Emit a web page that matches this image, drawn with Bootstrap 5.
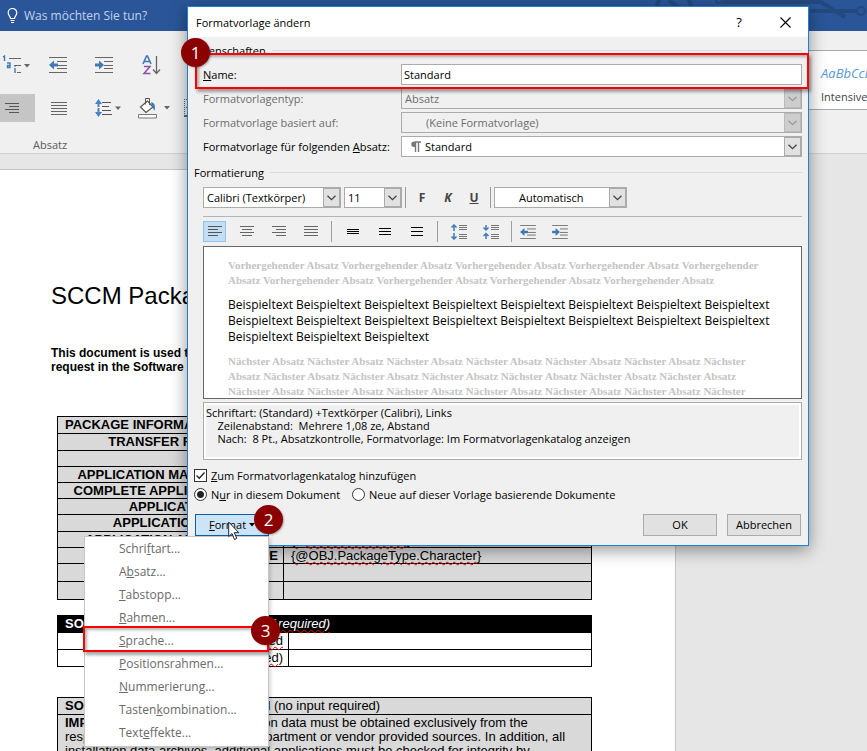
<!DOCTYPE html>
<html lang="de">
<head>
<meta charset="utf-8">
<meta name="viewport" content="width=device-width, initial-scale=1">
<title>Formatvorlage ändern</title>
<link href="https://cdn.jsdelivr.net/npm/bootstrap@5.3.0/dist/css/bootstrap.min.css" rel="stylesheet">
<style>
:root{--ui:"Open Sans","Noto Sans",sans-serif;--doc:"Liberation Sans",Arial,sans-serif}
body{font-family:var(--ui);font-size:11px;line-height:15px;color:#000;background:#e6e6e6}
.app-window{height:100vh;overflow:hidden;background:#e6e6e6}
svg{display:block;flex:none}
button{font-family:inherit}
.topbar{height:31px;background:#2a5699;color:#c3d2ea;font-size:12px}
.topbar .circuit{color:#24497f}
.bulb{margin:0 6px 0 3px}
.ribbon{height:123px;background:#f0f0f0;border-bottom:1px solid #d2d2d2}
.tool{border:0;background:none;padding:0;height:28px;display:flex;align-items:center}
.tool-row{height:28px;margin-bottom:15px}
.tool.chosen{background:#c5c5c5}
.group-label{font-size:11px;color:#5c5c5c;padding-left:33px}
.gallery{width:91px;height:60px;margin-top:19px;background:#fff;border:1px solid #ababab;border-right:0;overflow:hidden;padding:13px 0 0 44px;white-space:nowrap;text-align:left}
.gallery em{color:#5b9bd5;font-size:13px;line-height:18px;display:block}
.gallery span{font-size:11px;color:#444;line-height:30px}
.sheet{width:78%;margin-top:15px;background:#fff;border:1px solid #c6c6c6;border-width:1px 1px 0 0;font-family:var(--doc);padding:112px 83px 0 57px;height:100%}
.sheet h1{font-size:24px;line-height:28px;margin:0 0 36px -6px;white-space:nowrap;font-weight:400}
.lead-in{font-size:12px;line-height:14px;font-weight:700;margin:0 0 42px -6px;white-space:nowrap}
.form-grid{width:100%;border-collapse:collapse;font-size:13px;line-height:14px;white-space:nowrap;table-layout:fixed;margin-bottom:15px}
.form-grid th,.form-grid td{border:1px solid #000;padding:1px 7px 0;height:16px;vertical-align:top}
.form-grid th,.form-grid .text-end{padding-right:5px}
.form-grid th{text-align:right;width:226px}
.form-grid.grey{background:#d9d9d9}
.form-grid.apart{margin-top:30px}
.form-grid .start{text-align:left}
.form-grid .tall{height:18px}
.form-grid .row-mid{height:17px}
.form-grid .inverse{background:#000;color:#fff}
.spell{text-decoration:underline wavy #e00 1px;text-underline-offset:1px}
.dialog-box{position:absolute;left:187px;top:6px;width:622px;background:#f0f0f0;border:1px solid #1e7fd4;box-shadow:0 4px 16px rgba(0,0,0,.42);z-index:2}
.title-strip{height:30px;background:#fff;padding-left:8px;font-size:11px}
.title-strip button{border:0;background:none;padding:0;width:46px;height:30px;display:flex;align-items:center;justify-content:center;font-size:13px}
.dialog-main{padding:5px 6px 9px 6px}
.group-title{gap:6px;height:16px}
.group-title i{height:1px;background:#dadada;flex:1}
.props{padding-top:6px;margin-bottom:7px}
.prop-row{display:grid;grid-template-columns:198px 1fr;padding-left:9px;margin-bottom:3px;align-items:center}
.field{height:21px;border:1px solid #ababab;background:#fff;font-size:11px;line-height:15px;padding:0 2px;border-radius:0;color:#000;width:100%;min-width:0}
.combo{display:flex;height:21px;border:1px solid #ababab;background:#fff;min-width:0}
.combo select{appearance:none;border:0;background:none;flex:1;min-width:0;padding:0 3px;font-size:11px;line-height:15px;color:#000;opacity:1}
.combo .drop{width:17px;background:#e1e1e1;border:1px solid #ababab;display:flex;align-items:center;justify-content:center;pointer-events:none;color:#444}
.combo.off{background:#f0f0f0}
.combo.off select,.off-label{color:#6d6d6d}
.combo.off .drop{background:#cdcdcd;border-color:#bbb;color:#999}
.w-font{width:138px}.w-size{width:58px}.w-color{width:133px}
.indent-1 select{padding-left:24px}
.font-tools{gap:3px;padding-top:7px}
.divider{width:1px;height:21px;background:#9c9c9c}
.fmt{width:26px;height:21px;border:0;background:none;padding:0;font-size:12px;font-weight:700;color:#444;line-height:21px}
.para-tools{gap:9px}
.para{width:23px;height:21px;border:1px solid transparent;background:none;padding:0;display:flex;align-items:center;justify-content:center}
.para.chosen{background:#c2def5;border-color:#90c4ef}
.indented{padding-left:9px}
.preview{height:153px;border:1px solid #666;background:#fff;overflow:hidden;padding:11px 24px 0;white-space:nowrap}
.preview p{margin:0 0 9px}
.preview .ghost{font:700 11px/15px "Liberation Serif",serif;color:#c4c4c4}
.preview .sample{font-size:12px;line-height:16px}
.summary{height:58px;margin-top:3px;border:1px solid #ababab;box-shadow:inset 0 0 0 2px #fff;padding:3px 2px;font-size:11px;line-height:13px;white-space:pre}
.options{padding-top:6px}
.opt{height:19px;gap:4px;display:flex;align-items:center}
.opt input{appearance:none;width:13px;height:13px;margin:0;border:1px solid #333;background:#fff;flex:none}
.opt input[type=radio]{border-radius:50%}
.opt input[type=radio]:checked{background:radial-gradient(circle,#222 3px,#fff 4px)}
.tick{position:relative;display:flex}
.tick svg{position:absolute;left:1px;top:1px;pointer-events:none}
.actions{gap:10px;padding:10px 1px 0}
.push{width:74px;height:22px;border:1px solid #ababab;background:#e1e1e1;padding:0;font-size:11px;line-height:20px}
.push.hot{background:#cce4f7;border-color:#0b5ea8}
.pop-menu{position:absolute;left:84px;top:536px;width:185px;background:#fff;border:1px solid #c6c6c6;padding:0 0 2px;z-index:4;box-shadow:2px 2px 3px rgba(0,0,0,.15)}
.pop-menu button{display:block;width:100%;height:23px;border:0;background:none;text-align:left;padding:0 0 0 34px;font-size:12px;color:#6a6a6a;line-height:22px}
.marker{position:absolute;width:29px;height:29px;border-radius:50%;background:#8b0000;color:#fff;text-align:center;font-size:17px;line-height:29px;z-index:6;box-shadow:1px 1px 2px rgba(0,0,0,.3)}
.frame{position:absolute;border:2px solid #f00;z-index:5;box-shadow:2px 3px 3px rgba(0,0,0,.35),inset 2px 2px 3px rgba(0,0,0,.3);pointer-events:none}
.m1{left:181px;top:38px}.m2{left:254px;top:505px}.m3{left:251px;top:616px}
.f1{left:195px;top:53px;width:614px;height:36px}
.f3{left:83px;top:626px;width:186px;height:26px}
.pointer{position:absolute;left:228px;top:521px;z-index:7}
</style>
<script src="https://cdn.jsdelivr.net/npm/bootstrap@5.3.0/dist/js/bootstrap.bundle.min.js"></script>
</head>
<body>
<svg width="0" height="0" class="position-absolute" aria-hidden="true">
<defs>
<symbol id="chev" viewBox="0 0 9 6"><path d="M.5.8 4.5 4.6 8.5.8" fill="none" stroke="currentColor" stroke-width="1.3"/></symbol>
<symbol id="dedent" viewBox="0 0 18 16"><path d="M0 .5h18M8 4.5h10M8 8.5h10M8 11.5h10M0 15.5h18" stroke="#666" fill="none"/><path d="M0 8l5-4.5v3h4v3H5v3z" fill="#4179b5"/></symbol>
<symbol id="indent" viewBox="0 0 18 16"><path d="M0 .5h18M9 4.5h9M9 8.5h9M9 11.5h9M0 15.5h18" stroke="#666" fill="none"/><path d="M9 8 4 3.500v3H0v3h4v3z" fill="#4179b5"/></symbol>
</defs>
</svg>

<div class="app-window position-relative">
  <header class="topbar d-flex align-items-center ps-1">
    <svg class="bulb" width="11" height="16" viewBox="0 0 10 16" fill="none" stroke="#fff" stroke-width="1.200"><path d="M3 10.500C3 8.500.7 7.500.7 4.800a4.300 4.300 0 0 1 8.600 0C9.300 7.500 7 8.500 7 10.500zM3 12.500h4M3.500 14.500h3"/></svg>
    <span>Was möchten Sie tun?</span>
    <svg class="circuit ms-auto" width="212" height="31" viewBox="0 0 212 31" fill="none" stroke="currentColor" stroke-width="4"><circle cx="19" cy="8" r="17"/><path d="M14 0l10 8M68 2h98l24 15M155 11h47"/><circle cx="64" cy="0" r="3" stroke-width="2"/><circle cx="206" cy="11" r="4" stroke-width="2"/></svg>
  </header>

  <section class="ribbon d-flex" aria-label="Absatz">
    <div class="pt-3">
      <div class="tool-row d-flex mt-1">
        <button class="tool" type="button" aria-label="Liste mit mehreren Ebenen"><svg width="30" height="20" viewBox="-3 0 30 20"><g fill="none" stroke="#666"><path d="M6 3.500h12M11 10.500h7M14 17.500h4"/></g><g fill="none" stroke="#4179b5" stroke-width="1.400"><path d="M0 2l1.500-1v5M4 8h3v4.500H4.500v-2H7M12 13v5M12 10.500v1.300"/></g><path d="M21 9h6l-3 3.500z" fill="#666"/></svg></button>
        <button class="tool ms-3" type="button" aria-label="Einzug verkleinern"><svg width="21" height="16"><use href="#dedent" width="18" height="16" x="3"/></svg></button>
        <button class="tool ms-4" type="button" aria-label="Einzug vergrößern"><svg width="22" height="16"><use href="#indent" width="18" height="16" x="4"/></svg></button>
        <button class="tool ms-4 ps-1" type="button" aria-label="Sortieren"><svg width="22" height="20" viewBox="0 0 22 20" fill="none"><path d="M2 9 5.500 1h1L10 9M3.500 6.500h5" stroke="#4179b5" stroke-width="1.600"/><path d="M3 11.500h6L3 18.500h6.500" stroke="#8a52a8" stroke-width="1.500"/><path d="M15.500 1v17M12 14.500l3.500 4 3.500-4" stroke="#666" stroke-width="1.300"/></svg></button>
      </div>
      <div class="tool-row d-flex">
        <button class="tool chosen" type="button" aria-label="Rechtsbündig"><svg width="35" height="13" viewBox="0 0 35 13"><path d="M5 1.500h14M9 4.500h10M5 7.500h14M9 10.500h10" stroke="#555"/></svg></button>
        <button class="tool ms-3" type="button" aria-label="Blocksatz"><svg width="16" height="13" viewBox="0 0 16 13"><path d="M0 .5h16M0 3.500h16M0 6.500h16M0 9.500h16M0 12.500h16" stroke="#666"/></svg></button>
        <button class="tool ms-4" type="button" aria-label="Zeilenabstand"><svg class="ms-1" width="27" height="20" viewBox="1 0 27 20"><path d="M1 6l3.500-5L8 6H5.500v8H8l-3.500 5L1 14h2.500V6z" fill="#4a80c4"/><path d="M1 9.500h8" stroke="#f0f0f0"/><path d="M8 4.500h9M8 8.500h7M8 12.500h9M8 16.500h10" stroke="#555"/><path d="M21 8.500h6l-3 3.500z" fill="#666"/></svg></button>
        <button class="tool ms-3" type="button" aria-label="Schattierung"><svg width="33" height="22" viewBox="2 0 33 22" fill="none"><path d="M4.500 10 11.500 4l5.500 6-7 5.500z" fill="#fff" stroke="#555" stroke-width="1.200"/><path d="M9.500 7.500V1.500h4V8" stroke="#555"/><path d="M15 5q5.500 1 3.500 9l-2.500-4.500z" fill="#4179b5"/><path d="M2.500 17.500h18v3.500h-18z" fill="#fff" stroke="#777"/><path d="M28 9h6l-3 3.500z" fill="#666"/></svg></button>
        <button class="tool ms-2 ps-1" type="button" aria-label="Rahmen"><svg width="18" height="18" viewBox="-1 0 18 18"><path d="M.5 0v17M0 .5h18M9.500 0v17M0 8.500h18" stroke="#666" stroke-dasharray="1 1"/><path d="M0 17h18" stroke="#666" stroke-width="2"/></svg></button>
      </div>
      <div class="group-label">Absatz</div>
    </div>
    <button class="gallery ms-auto" type="button"><em>AaBbCcDc</em><span>Intensives Zitat</span></button>
  </section>

  <main class="sheet">
    <h1>SCCM Packaging Request</h1>
    <p class="lead-in">This document is used to place a<br>request in the Software Packaging</p>
    <table class="form-grid grey">
      <tbody>
      <tr><th class="start row-mid">PACKAGE INFORMATION</th><td></td></tr>
      <tr><th class="row-mid">TRANSFER FOLDER NAME</th><td></td></tr>
      <tr><th></th><td></td></tr>
      <tr><th>APPLICATION MANUFACTURER</th><td></td></tr>
      <tr><th>COMPLETE APPLICATION NAME</th><td></td></tr>
      <tr><th>APPLICATION VERSION</th><td></td></tr>
      <tr><th class="row-mid">APPLICATION LANGUAGE</th><td></td></tr>
      <tr><th>APPLICATION ARCHITECTURE</th><td>{<span class="spell">@OBJ.Architecture</span>}</td></tr>
      <tr><th>PACKAGE TYPE</th><td>{<span class="spell">@OBJ.PackageType.Character</span>}</td></tr>
      <tr><th class="tall"></th><td></td></tr>
      <tr><th class="tall"></th><td></td></tr>
      </tbody>
    </table>
    <table class="form-grid">
      <colgroup><col style="width:231px"><col></colgroup>
      <tbody>
      <tr><td class="inverse start row-mid" colspan="2"><b>SOFTWARE DEPENDENCY</b> <i>(only if <span class="spell">required)</span></i></td></tr>
      <tr><td class="text-end row-mid">Software <span class="spell">required</span></td><td></td></tr>
      <tr><td class="text-end row-mid">Version (if <span class="spell">required)</span></td><td></td></tr>
      </tbody>
    </table>
    <table class="form-grid grey apart">
      <tbody>
      <tr><td class="row-mid"><b>SOFTWARE DATA VERIFICATION</b> (no input required)</td></tr>
      <tr><td><b>IMPORTANT:</b> The source installation data must be obtained exclusively from the<br>responsible software packaging department or vendor provided sources. In addition, all<br>installation data archives, additional applications must be checked for integrity by</td></tr>
      </tbody>
    </table>
  </main>

  <div class="dialog-box" role="dialog" aria-labelledby="dlgTitle">
    <div class="title-strip d-flex align-items-center">
      <span id="dlgTitle" class="me-auto">Formatvorlage ändern</span>
      <button type="button" aria-label="Hilfe">?</button>
      <button type="button" aria-label="Schließen"><svg width="11" height="11" viewBox="0 0 11 11"><path d="M.5.5l10 10M10.500.5l-10 10" stroke="#000" stroke-width="1.100"/></svg></button>
    </div>
    <form class="dialog-main">
      <div class="group-title d-flex align-items-center"><span>Eigenschaften</span><i></i></div>
      <div class="props">
        <div class="prop-row"><label for="n"><u>N</u>ame:</label><input class="field" id="n" value="Standard"></div>
        <div class="prop-row"><label class="off-label" for="t">Formatvorlagentyp:</label><div class="combo off"><select id="t" disabled><option>Absatz</option></select><span class="drop"><svg width="9" height="6"><use href="#chev"/></svg></span></div></div>
        <div class="prop-row"><label class="off-label" for="b">Formatvorlage basiert auf:</label><div class="combo off indent-1"><select id="b" disabled><option>(Keine Formatvorlage)</option></select><span class="drop"><svg width="9" height="6"><use href="#chev"/></svg></span></div></div>
        <div class="prop-row"><label for="a">Formatvorlage für folgenden <u>A</u>bsatz:</label><div class="combo align-items-stretch"><svg class="ms-2 mt-1" width="11" height="11" viewBox="0 0 11 11"><path d="M5 1h6M5.500 1v10M8.500 1v10" stroke="#777" stroke-width="1.400"/><path d="M5.500 .5H4a2.700 2.700 0 0 0 0 5.500h1.500z" fill="#777"/></svg><select class="ps-1" id="a"><option>Standard</option></select><span class="drop"><svg width="9" height="6"><use href="#chev"/></svg></span></div></div>
      </div>
      <div class="group-title d-flex align-items-center"><span>Formatierung</span><i></i></div>
      <div class="indented">
        <div class="font-tools d-flex align-items-center">
          <div class="combo w-font"><select aria-label="Schriftart"><option>Calibri (Textkörper)</option></select><span class="drop"><svg width="9" height="6"><use href="#chev"/></svg></span></div>
          <div class="combo w-size"><select aria-label="Schriftgrad"><option>11</option></select><span class="drop"><svg width="9" height="6"><use href="#chev"/></svg></span></div>
          <span class="divider"></span>
          <div class="d-flex"><button class="fmt" type="button">F</button><button class="fmt fst-italic" type="button">K</button><button class="fmt text-decoration-underline" type="button">U</button></div>
          <span class="divider"></span>
          <div class="combo w-color indent-1"><select aria-label="Schriftfarbe"><option>Automatisch</option></select><span class="drop"><svg width="9" height="6"><use href="#chev"/></svg></span></div>
        </div>
        <hr class="mt-2 mb-1">
        <div class="para-tools d-flex align-items-center">
          <button class="para chosen" type="button" aria-label="Linksbündig"><svg width="14" height="11"><path d="M0 .5h14M0 3.500h10M0 6.500h14M0 9.500h10" stroke="#555"/></svg></button>
          <button class="para" type="button" aria-label="Zentriert"><svg width="14" height="11"><path d="M0 .5h14M2 3.500h10M0 6.500h14M2 9.500h10" stroke="#666"/></svg></button>
          <button class="para" type="button" aria-label="Rechtsbündig"><svg width="14" height="11"><path d="M0 .5h14M4 3.500h10M0 6.500h14M4 9.500h10" stroke="#666"/></svg></button>
          <button class="para" type="button" aria-label="Blocksatz"><svg width="14" height="11"><path d="M0 .5h14M0 3.500h14M0 6.500h14M0 9.500h14" stroke="#666"/></svg></button>
          <span class="divider"></span>
          <button class="para" type="button" aria-label="Einfacher Abstand"><svg width="12" height="9"><path d="M0 2.500h12M0 4.500h12M0 6.500h12" stroke="#000"/></svg></button>
          <button class="para" type="button" aria-label="Anderthalbfacher Abstand"><svg width="12" height="9"><path d="M0 1.500h12M0 4.500h12M0 7.500h12" stroke="#000"/></svg></button>
          <button class="para" type="button" aria-label="Doppelter Abstand"><svg width="12" height="11"><path d="M0 1.500h12M0 5.500h12M0 9.500h12" stroke="#000"/></svg></button>
          <span class="divider"></span>
          <button class="para" type="button" aria-label="Abstand vergrößern"><svg width="16" height="16"><path d="M8 1.500h8M8 3.500h8M8 5.500h8M8 10.500h8M8 12.500h8M8 14.500h8" stroke="#777"/><path d="M3 7V1M.5 3.500 3 1l2.500 2.500M3 9v6M.5 12.500 3 15l2.500-2.500" fill="none" stroke="#4179b5" stroke-width="1.500"/></svg></button>
          <button class="para" type="button" aria-label="Abstand verkleinern"><svg width="16" height="16"><path d="M8 1.500h8M8 3.500h8M8 5.500h8M8 10.500h8M8 12.500h8M8 14.500h8" stroke="#777"/><path d="M3 1v5M.5 3.500 3 6l2.500-2.500M3 15V9.500M.5 12 3 9.500 5.500 12" fill="none" stroke="#4179b5" stroke-width="1.500"/></svg></button>
          <div class="d-flex align-items-center gap-1">
            <span class="divider"></span>
            <button class="para" type="button" aria-label="Einzug verkleinern"><svg width="16" height="14"><use href="#dedent"/></svg></button>
          </div>
          <button class="para" type="button" aria-label="Einzug vergrößern"><svg width="16" height="14"><use href="#indent"/></svg></button>
        </div>
        <div class="preview mt-1">
          <p class="ghost">Vorhergehender Absatz Vorhergehender Absatz Vorhergehender Absatz Vorhergehender Absatz Vorhergehender<br>Absatz Vorhergehender Absatz Vorhergehender Absatz Vorhergehender Absatz Vorhergehender Absatz</p>
          <p class="sample">Beispieltext Beispieltext Beispieltext Beispieltext Beispieltext Beispieltext Beispieltext Beispieltext<br>Beispieltext Beispieltext Beispieltext Beispieltext Beispieltext Beispieltext Beispieltext Beispieltext<br>Beispieltext Beispieltext Beispieltext</p>
          <p class="ghost">Nächster Absatz Nächster Absatz Nächster Absatz Nächster Absatz Nächster Absatz Nächster Absatz Nächster<br>Absatz Nächster Absatz Nächster Absatz Nächster Absatz Nächster Absatz Nächster Absatz Nächster Absatz<br>Nächster Absatz Nächster Absatz Nächster Absatz Nächster Absatz Nächster Absatz Nächster Absatz Nächster</p>
        </div>
        <div class="summary">Schriftart: (Standard) +Textkörper (Calibri), Links
    Zeilenabstand:  Mehrere 1,08 ze, Abstand
    Nach:  8 Pt., Absatzkontrolle, Formatvorlage: Im Formatvorlagenkatalog anzeigen</div>
      </div>
      <div class="options">
        <div class="opt"><span class="tick"><input type="checkbox" id="c" checked><svg width="11" height="11" viewBox="0 0 11 11"><path d="M1.500 5.500 4.300 8.300 9.500 2.500" fill="none" stroke="#222" stroke-width="1.300"/></svg></span><label for="c"><u>Z</u>um Formatvorlagenkatalog hinzufügen</label></div>
        <div class="opt"><input type="radio" name="s" id="r1" checked><label for="r1">N<u>u</u>r in diesem Dokument</label><input class="ms-2" type="radio" name="s" id="r2"><label for="r2">Neue auf dieser Vorlage basierende Dokumente</label></div>
      </div>
      <div class="actions d-flex">
        <button class="push hot me-auto" type="button"><u>F</u>ormat <svg class="d-inline-block" width="6" height="6"><path d="M0 0h6L3 3.500z"/></svg></button>
        <button class="push" type="button">OK</button>
        <button class="push" type="button">Abbrechen</button>
      </div>
    </form>
  </div>

  <div class="pop-menu" role="menu">
    <button type="button" role="menuitem">Schri<u>f</u>tart...</button>
    <button type="button" role="menuitem">A<u>b</u>satz...</button>
    <button type="button" role="menuitem"><u>T</u>abstopp...</button>
    <button type="button" role="menuitem"><u>R</u>ahmen...</button>
    <button type="button" role="menuitem"><u>S</u>prache...</button>
    <button type="button" role="menuitem"><u>P</u>ositionsrahmen...</button>
    <button type="button" role="menuitem"><u>N</u>ummerierung...</button>
    <button type="button" role="menuitem">Tasten<u>k</u>ombination...</button>
    <button type="button" role="menuitem">Text<u>e</u>ffekte...</button>
  </div>

  <div class="frame f1"></div><div class="frame f3"></div>
  <span class="marker m1">1</span><span class="marker m2">2</span><span class="marker m3">3</span>
  <svg class="pointer" width="12" height="20" viewBox="0 0 12 20"><path d="M.7 1v14.500l3.300-3 2.500 6 2.300-1-2.500-5.800h4.500z" fill="#fff" stroke="#223" stroke-width="1"/></svg>
</div>
</body>
</html>
